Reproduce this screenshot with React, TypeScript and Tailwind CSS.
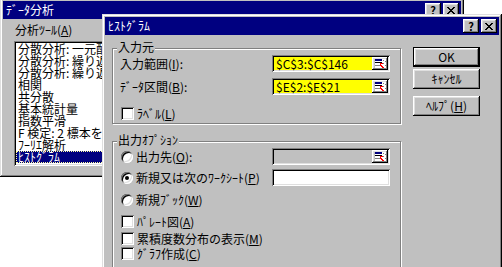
import type { ReactNode } from 'react';

// Win95 style bevels
const raised = 'shadow-[inset_-1px_-1px_#000,inset_1px_1px_#fff,inset_-2px_-2px_#808080,inset_2px_2px_#dfdfdf]';
const sunken = 'shadow-[inset_1px_1px_#808080,inset_-1px_-1px_#fff,inset_2px_2px_#000,inset_-2px_-2px_#dfdfdf]';
const frame = 'shadow-[inset_-1px_-1px_#000,inset_1px_1px_#dfdfdf,inset_-2px_-2px_#808080,inset_2px_2px_#fff]';

const tools = [
    '分散分析: 一元配置',
    '分散分析: 繰り返しのある二元配置',
    '分散分析: 繰り返しのない二元配置',
    '相関',
    '共分散',
    '基本統計量',
    '指数平滑',
    'F 検定: 2 標本を使った分散の検定',
    'ﾌｰﾘｴ解析',
    'ﾋｽﾄｸﾞﾗﾑ',
];

const Key = ({ k }: { k: string }) => <span className="underline underline-offset-1">{k}</span>;

const CloseIcon = () => (
    <svg width="8" height="7" viewBox="0 0 8 7" shapeRendering="crispEdges">
        <path d="M0 0h2v1h-2zM6 0h2v1h-2zM1 1h2v1h-2zM5 1h2v1h-2zM2 2h4v1h-4zM3 3h2v1h-2zM2 4h4v1h-4zM1 5h2v1h-2zM5 5h2v1h-2zM0 6h2v1h-2zM6 6h2v1h-2z" fill="#000" />
    </svg>
);

const CapButton = ({ children }: { children: ReactNode }) => (
    <div className={`flex h-[14px] w-[16px] items-center justify-center bg-[#c0c0c0] text-[11px] font-bold leading-none text-black ${raised}`}>
        {children}
    </div>
);

const TitleBar = ({ title }: { title: string }) => (
    <div className="flex h-[18px] items-center justify-between bg-[#000080] pl-[3px] pr-[2px] text-white">
        <span>{title}</span>
        <div className="flex gap-[2px]">
            <CapButton>?</CapButton>
            <CapButton><CloseIcon /></CapButton>
        </div>
    </div>
);

// the little "collapse dialog" button of a RefEdit box
const RefButton = () => (
    <div className={`flex h-[13px] w-[16px] items-center justify-center bg-[#c0c0c0] ${raised}`}>
        <svg width="11" height="9" viewBox="0 0 11 9" shapeRendering="crispEdges">
            <rect x="0" y="0" width="11" height="9" fill="#fff" />
            <rect x="0" y="0" width="7" height="2" fill="#000080" />
            <rect x="0" y="3" width="7" height="1" fill="#000" />
            <rect x="0" y="6" width="7" height="1" fill="#808080" />
            <rect x="8" y="1" width="1" height="1" fill="#808080" />
            <rect x="8" y="4" width="1" height="1" fill="#808080" />
            <rect x="10" y="2" width="1" height="1" fill="#808080" />
            <rect x="10" y="6" width="1" height="1" fill="#808080" />
            <path d="M5 4h3v1h-2v1h1v1h1v1h1v1h-2v-1h-1v-1h-1z" fill="#ff0000" />
        </svg>
    </div>
);

const Field = ({ value, bg, refEdit }: { value?: string; bg: string; refEdit?: boolean }) => (
    <div className={`flex h-[17px] w-[118px] items-center justify-between pl-[4px] pr-[2px] ${bg} ${sunken}`}>
        <span className="text-black">{value}</span>
        {refEdit && <RefButton />}
    </div>
);

const Check = () => <div className={`h-[13px] w-[13px] shrink-0 bg-white ${sunken}`} />;

const Radio = ({ on }: { on?: boolean }) => (
    <div className={`flex h-[12px] w-[12px] shrink-0 items-center justify-center rounded-full bg-white ${sunken}`}>
        {on && <div className="h-[4px] w-[4px] rounded-full bg-black" />}
    </div>
);

const Group = ({ label, className, children }: { label: string; className: string; children: ReactNode }) => (
    <div className={`relative border border-[#808080] shadow-[inset_1px_1px_#fff,1px_1px_#fff] ${className}`}>
        <span className="absolute -top-[8px] left-[4px] bg-[#c0c0c0] px-[1px]">{label}</span>
        {children}
    </div>
);

const Button = ({ children, isDefault }: { children: ReactNode; isDefault?: boolean }) => (
    <div className={`h-[20px] w-[67px] bg-[#c0c0c0] ${isDefault ? 'border border-black' : ''}`}>
        <div className={`flex h-full w-full items-center justify-center ${raised}`}>{children}</div>
    </div>
);

export default function App() {
    return (
        <div className="relative h-[267px] w-[502px] overflow-hidden bg-white font-['Noto_Sans_CJK_JP','Noto_Sans_CJK_SC',sans-serif] text-[12px] leading-[12px] text-black">
            {/* データ分析 (behind) */}
            <div className={`absolute left-0 top-[-2px] h-[179px] w-[464px] bg-[#c0c0c0] p-[3px] ${frame}`}>
                <TitleBar title="ﾃﾞｰﾀ分析" />
                <div className="ml-[12px] mt-[5px]">分析ﾂｰﾙ(<Key k="A" />)</div>
                <div className={`ml-[11px] mt-[5px] h-[125px] w-[220px] bg-white p-[2px] ${sunken}`}>
                    {tools.map((t, i) => (
                        <div
                            key={t}
                            className={`h-[12px] whitespace-nowrap pl-[2px] ${i === tools.length - 1 ? 'bg-[#000080] text-white outline outline-1 -outline-offset-1 outline-dotted outline-[#ffffa0]' : ''}`}
                        >
                            {t}
                        </div>
                    ))}
                </div>
            </div>

            {/* ヒストグラム (front) */}
            <div className={`absolute left-[102px] top-[14px] h-[262px] w-[400px] bg-[#c0c0c0] p-[3px] ${frame}`}>
                <TitleBar title="ﾋｽﾄｸﾞﾗﾑ" />
                <div className="flex">
                    <div className="ml-[7px] w-[289px]">
                        <Group label="入力元" className="mt-[13px] pb-[3px]">
                            <div className="mt-[6px] flex h-[17px] items-center pl-[7px]">
                                <span className="w-[152px]">入力範囲(<Key k="I" />):</span>
                                <Field value="$C$3:$C$146" bg="bg-[#ffff00]" refEdit />
                            </div>
                            <div className="mt-[6px] flex h-[17px] items-center pl-[7px]">
                                <span className="w-[152px]">ﾃﾞｰﾀ区間(<Key k="B" />):</span>
                                <Field value="$E$2:$E$21" bg="bg-[#ffff00]" refEdit />
                            </div>
                            <div className="mt-[12px] flex h-[13px] items-center gap-[3px] pl-[8px]">
                                <Check />
                                <span>ﾗﾍﾞﾙ(<Key k="L" />)</span>
                            </div>
                        </Group>

                        <Group label="出力ｵﾌﾟｼｮﾝ" className="mt-[17px] h-[140px]">
                            <div className="mt-[6px] flex h-[17px] items-center pl-[8px]">
                                <div className="flex w-[151px] items-center gap-[3px]">
                                    <Radio />
                                    <span>出力先(<Key k="O" />):</span>
                                </div>
                                <Field bg="bg-[#c0c0c0]" refEdit />
                            </div>
                            <div className="mt-[4px] flex h-[17px] items-center pl-[8px]">
                                <div className="flex w-[151px] items-center gap-[3px]">
                                    <Radio on />
                                    <span>新規又は次のﾜｰｸｼｰﾄ(<Key k="P" />)</span>
                                </div>
                                <Field bg="bg-white" />
                            </div>
                            <div className="mt-[5px] flex h-[17px] items-center gap-[3px] pl-[8px]">
                                <Radio />
                                <span>新規ﾌﾞｯｸ(<Key k="W" />)</span>
                            </div>
                            <div className="mt-[7px] flex h-[13px] items-center gap-[3px] pl-[8px]">
                                <Check />
                                <span>ﾊﾟﾚｰﾄ図(<Key k="A" />)</span>
                            </div>
                            <div className="mt-[4px] flex h-[13px] items-center gap-[3px] pl-[8px]">
                                <Check />
                                <span>累積度数分布の表示(<Key k="M" />)</span>
                            </div>
                            <div className="mt-[2px] flex h-[13px] items-center gap-[3px] pl-[8px]">
                                <Check />
                                <span>ｸﾞﾗﾌ作成(<Key k="C" />)</span>
                            </div>
                        </Group>
                    </div>

                    <div className="ml-[12px] mt-[12px] flex flex-col">
                        <Button isDefault>OK</Button>
                        <div className="mt-[2px]"><Button>ｷｬﾝｾﾙ</Button></div>
                        <div className="mt-[7px]"><Button>ﾍﾙﾌﾟ(<Key k="H" />)</Button></div>
                    </div>
                </div>
            </div>
        </div>
    );
}
